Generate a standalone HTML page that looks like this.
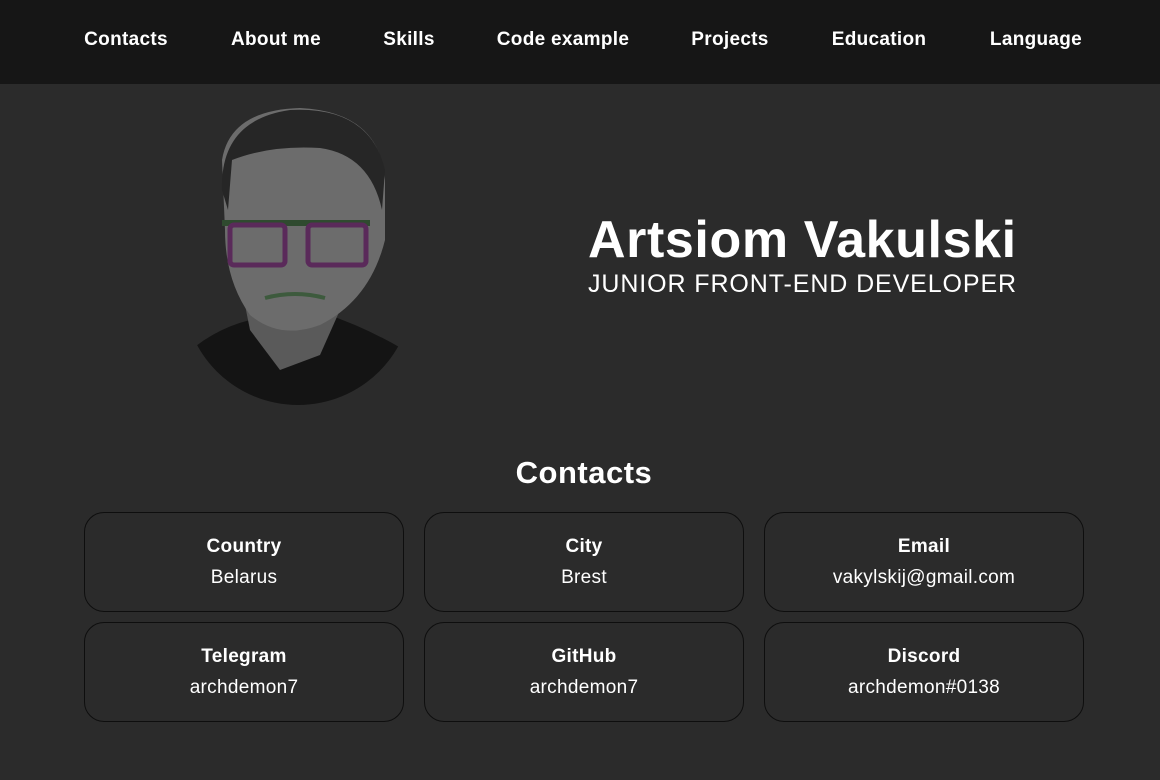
<!DOCTYPE html>
<html><head><meta charset="utf-8"><style>
*{margin:0;padding:0;box-sizing:border-box}
body{width:1160px;height:780px;background:#2b2b2b;color:#fff;font-family:"Liberation Sans",sans-serif;overflow:hidden;position:relative}
nav{height:84px;background:#161616;position:relative}
nav span{position:absolute;top:29px;width:200px;margin-left:-100px;text-align:center;font-size:19px;font-weight:bold;white-space:nowrap;letter-spacing:0.3px}
.name{position:absolute;left:588px;top:210px;font-size:52px;font-weight:bold;letter-spacing:0.6px}
.role{position:absolute;left:588px;top:270px;font-size:25px;letter-spacing:0.9px;font-weight:normal}
h2{position:absolute;left:0;width:1168px;text-align:center;top:455px;font-size:31px;letter-spacing:0.5px}
.card{position:absolute;width:320px;height:100px;border:1px solid #0e0e0e;border-radius:20px;text-align:center}
.card b{display:block;margin-top:23px;font-size:19px;letter-spacing:0.3px}
.card p{margin-top:9px;font-size:19px;letter-spacing:0.3px}
</style></head><body>
<nav>
<span style="left:126px">Contacts</span>
<span style="left:276px">About me</span>
<span style="left:409px">Skills</span>
<span style="left:563px">Code example</span>
<span style="left:730px">Projects</span>
<span style="left:879px">Education</span>
<span style="left:1036px">Language</span>
</nav>
<svg style="position:absolute;left:170px;top:100px" width="260" height="310" viewBox="0 0 260 310">
<defs><clipPath id="c"><rect x="0" y="0" width="260" height="190"/><circle cx="128" cy="190" r="115"/></clipPath></defs>
<g clip-path="url(#c)">
<path d="M10 260 Q40 230 80 220 L100 215 L160 215 L185 225 Q220 240 250 260 L250 310 L10 310Z" fill="#141414"/>
<path d="M70 180 L80 230 L110 270 L150 255 L170 210 L175 170Z" fill="#5a5a5a"/>
<path d="M52 60 Q60 10 130 8 Q210 12 215 80 L215 140 Q200 200 150 225 Q110 240 80 215 Q55 180 55 130Z" fill="#6c6c6c"/>
<path d="M52 90 Q50 20 120 10 Q200 6 215 70 L212 110 Q200 55 150 48 Q100 45 62 60 L58 110Z" fill="#262626"/>
<rect x="52" y="120" width="148" height="6" fill="#2f4a2f"/>
<rect x="60" y="125" width="55" height="40" rx="4" fill="none" stroke="#5a2a5a" stroke-width="5"/>
<rect x="138" y="125" width="58" height="40" rx="4" fill="none" stroke="#5a2a5a" stroke-width="5"/>
<path d="M95 198 Q125 190 155 198" stroke="#3d5a3d" stroke-width="4" fill="none"/>
</g>
</svg>
<div class="name">Artsiom Vakulski</div>
<div class="role">JUNIOR FRONT-END DEVELOPER</div>
<h2>Contacts</h2>
<div class="card" style="left:84px;top:512px"><b>Country</b><p>Belarus</p></div>
<div class="card" style="left:424px;top:512px"><b>City</b><p>Brest</p></div>
<div class="card" style="left:764px;top:512px"><b>Email</b><p>vakylskij@gmail.com</p></div>
<div class="card" style="left:84px;top:622px"><b>Telegram</b><p>archdemon7</p></div>
<div class="card" style="left:424px;top:622px"><b>GitHub</b><p>archdemon7</p></div>
<div class="card" style="left:764px;top:622px"><b>Discord</b><p>archdemon#0138</p></div>
</body></html>
